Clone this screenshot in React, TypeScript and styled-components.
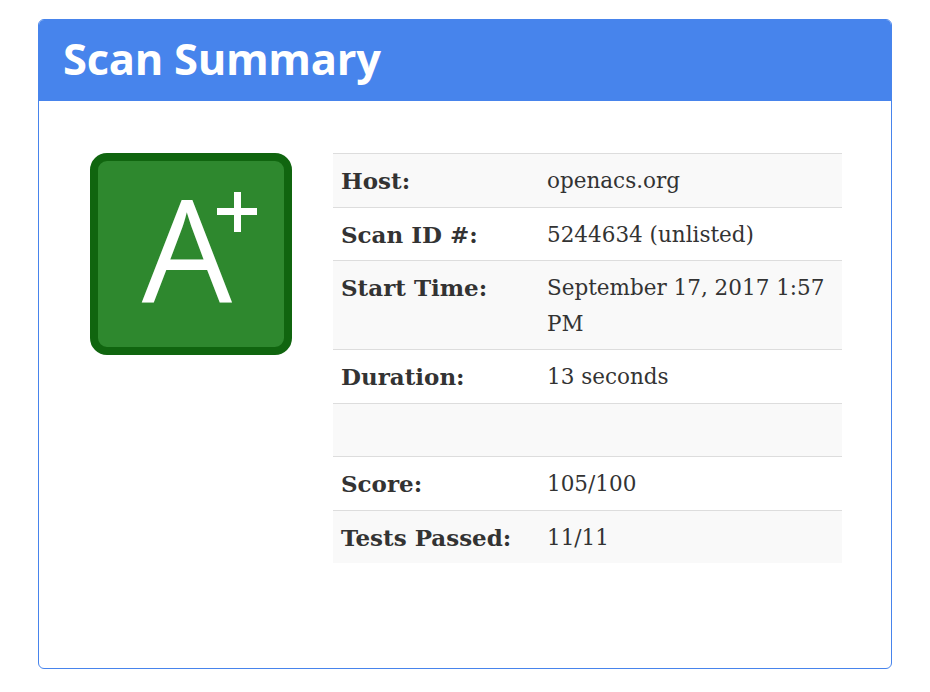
import { FunctionComponent } from "react";
import styled, { createGlobalStyle } from "styled-components";

const GlobalStyle = createGlobalStyle`
  html, body {
    margin: 0;
    padding: 0;
    background: #ffffff;
  }
  body {
    font-family: "DejaVu Serif", Georgia, serif;
    color: #333333;
  }
`;

const Page = styled.div`
  padding: 19px 38px 0 38px;
  width: 930px;
  box-sizing: border-box;
`;

const Panel = styled.section`
  width: 854px;
  height: 650px;
  box-sizing: border-box;
  border: 1px solid #4784ec;
  border-radius: 6px;
  overflow: hidden;
  display: flex;
  flex-direction: column;
`;

const PanelHeader = styled.header`
  height: 82px;
  background-color: #4784ec;
  display: flex;
  align-items: center;
  padding: 0 25px;
  margin: -1px -1px 0 -1px;
`;

const Title = styled.h1`
  margin: 0;
  font-family: "Open Sans", "Lato", sans-serif;
  font-weight: 700;
  font-size: 43.5px;
  letter-spacing: -0.3px;
  color: #ffffff;
  line-height: 1;
  padding-bottom: 3px;
`;

const PanelBody = styled.div`
  display: flex;
  align-items: flex-start;
  gap: 41px;
  padding: 52px 49px 0 51px;
`;

const GradeBox = styled.div`
  position: relative;
  flex: 0 0 auto;
  width: 202px;
  height: 202px;
  box-sizing: border-box;
  border: 8px solid #10650f;
  border-radius: 17px;
  background-color: #2e882e;
  display: flex;
  align-items: center;
  justify-content: center;
`;

const GradeLetter = styled.span`
  font-family: "Open Sans", "Liberation Sans", sans-serif;
  font-weight: 400;
  font-size: 143px;
  line-height: 1;
  color: #ffffff;
  margin: 0 8px 15px 0;
`;

const GradeModifier = styled.span`
  position: absolute;
  top: 31px;
  left: 119px;
  width: 40px;
  height: 40px;

  &::before,
  &::after {
    content: "";
    position: absolute;
    background: #ffffff;
  }
  &::before {
    left: 0;
    top: 16px;
    width: 40px;
    height: 7px;
  }
  &::after {
    left: 17px;
    top: 0;
    width: 7px;
    height: 40px;
  }
`;

const InfoTable = styled.table`
  flex: 1 1 auto;
  border-collapse: collapse;
  table-layout: fixed;
  font-size: 21.5px;
  line-height: 35px;
`;

const Row = styled.tr<{ $striped: boolean }>`
  background-color: ${(p) => (p.$striped ? "#f9f9f9" : "#ffffff")};
  border-top: 1px solid #dddddd;
`;

const Label = styled.th`
  width: 206px;
  padding: 9px 8px 8px 8px;
  box-sizing: border-box;
  text-align: left;
  vertical-align: top;
  font-weight: 700;
  font-size: 23px;
  white-space: nowrap;
`;

const Value = styled.td`
  padding: 9px 8px 8px 8px;
  vertical-align: top;
  font-weight: 400;
  line-height: 35.5px;
`;

const rows: [string, string][] = [
  ["Host:", "openacs.org"],
  ["Scan ID #:", "5244634 (unlisted)"],
  ["Start Time:", "September 17, 2017 1:57 PM"],
  ["Duration:", "13 seconds"],
  ["", "\u00a0"],
  ["Score:", "105/100"],
  ["Tests Passed:", "11/11"],
];

const App: FunctionComponent = () => {
  return (
    <>
      <GlobalStyle />
      <Page>
        <Panel>
          <PanelHeader>
            <Title>Scan Summary</Title>
          </PanelHeader>
          <PanelBody>
            <GradeBox>
              <GradeLetter>A</GradeLetter>
              <GradeModifier aria-label="plus" />
            </GradeBox>
            <InfoTable>
              <tbody>
                {rows.map(([label, value], i) => (
                  <Row key={i} $striped={i % 2 === 0}>
                    <Label>{label}</Label>
                    <Value>{value}</Value>
                  </Row>
                ))}
              </tbody>
            </InfoTable>
          </PanelBody>
        </Panel>
      </Page>
    </>
  );
};

export default App;
